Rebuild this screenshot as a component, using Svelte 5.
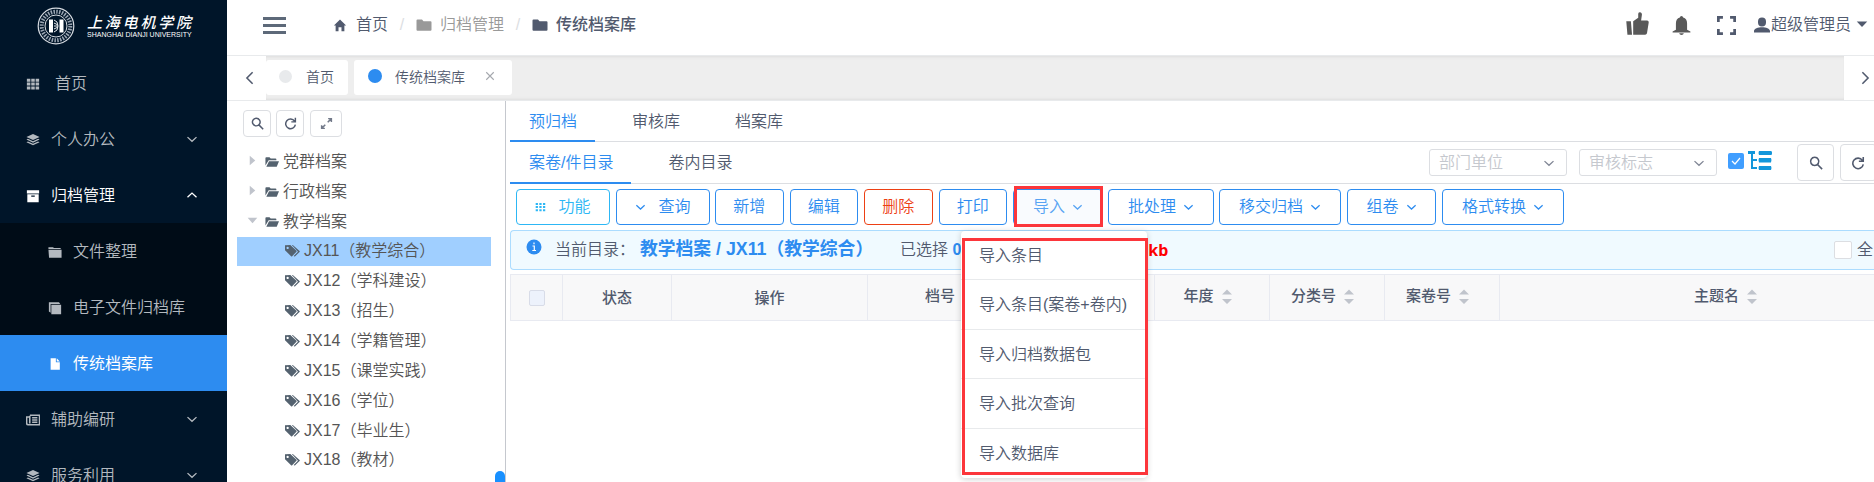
<script lang="ts">
  const icons: Record<string, string> = {
    grid: 'M1 2h4v3.400H1zM6 2h4v3.400H6zM11 2h4v3.400h-4zM1 6.400h4v3.400H1zM6 6.400h4v3.400H6zM11 6.400h4v3.400h-4zM1 10.800h4v3.400H1zM6 10.800h4v3.400H6zM11 10.800h4v3.400h-4z',
    dots: 'M1 2h3.300v3H1zM6.300 2h3.300v3H6.300zM11.600 2h3.300v3h-3.300zM1 6.600h3.300v3H1zM6.300 6.600h3.300v3H6.300zM11.600 6.600h3.300v3h-3.300zM1 11.200h3.300v3H1zM6.300 11.200h3.300v3H6.300zM11.600 11.200h3.300v3h-3.300z',
    layers: 'M8 1l7.5 3.5L8 8 .5 4.500zM2.200 6.600L8 9.300l5.800-2.700 1.700.9L8 11 .5 7.500zM2.200 9.600L8 12.300l5.800-2.700 1.700.9L8 14 .5 10.500z',
    box: 'M1 1.500h14v3.500H1zM1.500 6H14.500V15H1.500zM6 7.300V8.800h4V7.300z',
    folders: 'M.5 2.500h5l1.500 1h7.500v1H.5zM.5 5.300h15V14.500H1.200z',
    copies: 'M1 1.500h11.500l1.500 1.800H3v10.200l-2-1.500zM3.800 4.200H15V15H3.800z',
    file: 'M3 1.500h6v4.500h4.500v8.500H3zM10 1.500L13.500 5H10z',
    home: 'M8 1l7 7h-2v6.500H9.700V10H6.300v4.500H3V8H1z',
    folder: 'M.5 3.500q0-1 1-1h4.500l1.500 1.800h7q1 0 1 1v7.500q0 1-1 1h-13q-1 0-1-1z',
    open: 'M.5 12V3.500q0-1 1-1h3.700l1.300 1.500h5.500q1 0 1 1v1H4.200zM1.500 13.500L4.600 7H16l-2.600 6.500z',
    tags: 'M0 2.500v5.300l6.500 6.300q.6.400 1.100 0l4.600-4.700q.4-.6 0-1.100L5.700 2.200zM2.800 4a1.200 1.200 0 1 0 .01 0zM7.300 2.200h1l7.200 6.300q.6.600 0 1.200l-4.700 4.500q-.9.500-1.500-.3l4.500-4.700z',
    user: 'M8 .5a4 4 0 0 1 4 4v1a4 4 0 0 1-8 0v-1a4 4 0 0 1 4-4zM0 15.500v-1.600c0-2.300 4-3.700 8-3.700s8 1.400 8 3.700v1.600z',
    bell: 'M8 0q1.300 0 1.400 1.300 3.300 1 3.300 5v5.200L15.500 13v.9H.5V13l2.800-1.500V6.300q0-4 3.300-5Q6.700 0 8 0zM6 14.600h4Q9.600 16 8 16t-2-1.400z',
    thumb: 'M.2 6.500h3.200l.8 9.300H1zM5 6.500L8.500 4V1.200Q8.700.1 9.900.2q1.200.2 1.200 1.500l-.6 4.200h4.300q1.200.2 1 1.400l-1.200 7.500q-.3 1-1.300 1H5z',
    full: 'M0 0h5v2.300H2.300V5H0zM11 0h5v5h-2.300V2.300H11zM0 11h2.300v2.700H5V16H0zM13.700 11H16v5h-5v-2.300h2.700z',
    caret: 'M1 4.500h14L8 12z',
    right: 'M4 1l8 7-8 7z'
  };

  const lines: Record<string, string> = {
    down: 'M2 5.500l6 5.500 6-5.500',
    up: 'M2 11l6-5.500 6 5.500',
    left: 'M11 1.500L4.500 8l6.500 6.500',
    next: 'M5 1.500L11.500 8 5 14.500',
    search: 'M6.500 1.500a4.700 4.700 0 1 0 .01 0M10 10l5 5',
    refresh: 'M13 5A6 6 0 1 0 14 9.500M14 1v5H9',
    expand: 'M2 14L6.500 9.500M9.500 6.500L14 2M10 2h4v4M2 10v4h4',
    close: 'M2 2l12 12M14 2L2 14',
    news: 'M4.500 2.500h11v11h-13Q.7 13.300.7 11.500v-7h3.500M4.300 3v9M7 5.500h6M7 8h6M7 10.500h6'
  };

  const tree = [
    { label: '党群档案', open: false },
    { label: '行政档案', open: false },
    { label: '教学档案', open: true }
  ];
  const leaves = [
    'JX11（教学综合）',
    'JX12（学科建设）',
    'JX13（招生）',
    'JX14（学籍管理）',
    'JX15（课堂实践）',
    'JX16（学位）',
    'JX17（毕业生）',
    'JX18（教材）'
  ];

  const imports = ['导入条目', '导入条目(案卷+卷内)', '导入归档数据包', '导入批次查询', '导入数据库'];
  const plain = ['新增', '编辑', '删除', '打印'];

  let selected = $state('JX11（教学综合）');
</script>

{#snippet icon(name: string, cls = '')}
  <svg class="icon {cls}" viewBox="0 0 16 16"><path d={icons[name]} fill="currentColor" fill-rule="evenodd" /></svg>
{/snippet}

{#snippet line(name: string, cls = '')}
  <svg class="icon {cls}" viewBox="0 0 16 16"><path d={lines[name]} fill="none" stroke="currentColor" stroke-width="1.800" /></svg>
{/snippet}

{#snippet sorter()}
  <svg class="sorter" viewBox="0 0 10 16"><path d="M0 5.500L5 .5l5 5zM0 10h10l-5 5z" fill="#c0c4cc" /></svg>
{/snippet}

<div class="layout">
  <aside class="sidebar">
    <div class="logo">
      <svg class="seal" viewBox="0 0 38 38">
        <circle cx="19" cy="19" r="17.800" fill="none" stroke="#d5dae0" stroke-width="1.200" />
        <circle cx="19" cy="19" r="14.300" fill="none" stroke="#9aa5b2" stroke-width="4" stroke-dasharray="1.500 1.300" />
        <circle cx="19" cy="19" r="11" fill="none" stroke="#d5dae0" />
        <path d="M12 12.500h4v13h-4zM22.500 12.500h4v13h-4z" fill="#fff" />
        <path d="M17 13q4 1 4 6t-4 6M17 16l4 2M17 19h4M17 22l4-2" fill="none" stroke="#e8ebee" />
      </svg>
      <div class="school">
        <span class="school-cn">上海电机学院</span>
        <span class="school-en">SHANGHAI DIANJI UNIVERSITY</span>
      </div>
    </div>
    <nav>
      <div class="item home">{@render icon('grid')}<span>首页</span></div>
      <div class="item">{@render icon('layers')}<span>个人办公</span>{@render line('down', 'arrow')}</div>
      <div class="item opened">{@render icon('box')}<span>归档管理</span>{@render line('up', 'arrow')}</div>
      <div class="sub">
        <div class="item">{@render icon('folders')}<span>文件整理</span></div>
        <div class="item">{@render icon('copies')}<span>电子文件归档库</span></div>
        <div class="item current">{@render icon('file')}<span>传统档案库</span></div>
      </div>
      <div class="item">{@render line('news')}<span>辅助编研</span>{@render line('down', 'arrow')}</div>
      <div class="item">{@render icon('layers')}<span>服务利用</span>{@render line('down', 'arrow')}</div>
    </nav>
  </aside>

  <div class="main">
    <header class="header">
      <div class="burger"><i></i><i></i><i></i></div>
      <div class="crumbs">
        {@render icon('home', 'home-icon')}<span>首页</span>
        <em>/</em>
        {@render icon('folder', 'grey')}<span class="grey">归档管理</span>
        <em>/</em>
        {@render icon('folder')}<b>传统档案库</b>
      </div>
      <div class="tools">
        {@render icon('thumb', 'thumb')}
        {@render icon('bell', 'bell')}
        {@render icon('full', 'full')}
        {@render icon('user', 'user')}
        <span>超级管理员</span>
        {@render icon('caret', 'user-caret')}
      </div>
    </header>

    <div class="pages">
      <button class="scroll prev">{@render line('left')}</button>
      <div class="page-list">
        <div class="page"><i class="dot"></i><span>首页</span></div>
        <div class="page active"><i class="dot"></i><span>传统档案库</span>{@render line('close', 'close')}</div>
      </div>
      <button class="scroll next">{@render line('next')}</button>
    </div>

    <div class="content">
      <section class="tree">
        <div class="tree-tools">
          <button>{@render line('search')}</button>
          <button>{@render line('refresh')}</button>
          <button class="wide">{@render line('expand', 'thin')}</button>
        </div>
        {#each tree as node}
          <div class="node">
            {@render icon('right', node.open ? 'twist open' : 'twist')}
            {@render icon('open', 'folder')}
            <span>{node.label}</span>
          </div>
        {/each}
        {#each leaves as leaf}
          <div class="node leaf" class:selected={leaf === selected} onclick={() => (selected = leaf)} role="presentation">
            {@render icon('tags')}
            <span>{leaf}</span>
          </div>
        {/each}
        <div class="thumb-bar"></div>
      </section>

      <section class="work">
        <div class="tabs">
          <span class="tab active">预归档</span>
          <span class="tab">审核库</span>
          <span class="tab">档案库</span>
        </div>
        <div class="tabs second">
          <span class="tab active">案卷/件目录</span>
          <span class="tab">卷内目录</span>
          <div class="filters">
            <div class="select"><span>部门单位</span>{@render line('down')}</div>
            <div class="select"><span>审核标志</span>{@render line('down')}</div>
            <svg class="checked" viewBox="0 0 16 16"><rect width="16" height="16" rx="2" fill="#409eff" /><path d="M4 8l3 3 5-6" fill="none" stroke="#fff" stroke-width="1.200" /></svg>
            <svg class="tree-mode" viewBox="0 0 24 20"><path d="M0 0h7v3H5v5h4v2H5v6h4v2H3V3H0zM11 0h12q1 0 1 1.500v1Q24 4 23 4H11q-1-2 0-4zM11 7h12q1 2 0 4.500H11q-1-2.500 0-4.500zM11 15h12q1 2 0 4H11q-1-2 0-4z" fill="#1296db" /></svg>
            <button>{@render line('search')}</button>
            <button>{@render line('refresh')}</button>
          </div>
        </div>

        <div class="actions">
          <button class="func">{@render icon('dots')}功能</button>
          <button class="query">{@render line('down')}查询</button>
          {#each plain as label}
            <button class="plain" class:danger={label === '删除'}>{label}</button>
          {/each}
          <div class="import">
            <button>导入{@render line('down')}</button>
            <div class="mark"></div>
            <div class="menu">
              {#each imports as label}
                <div class="menu-item">{label}</div>
              {/each}
              <div class="menu-mark"></div>
            </div>
          </div>
          <button class="w106">批处理{@render line('down')}</button>
          <button class="w122">移交归档{@render line('down')}</button>
          <button class="w89">组卷{@render line('down')}</button>
          <button class="w122">格式转换{@render line('down')}</button>
        </div>

        <div class="notice">
          <svg class="info" viewBox="0 0 16 16"><circle cx="8" cy="8" r="7.500" fill="#2d8cf0" /><path d="M8 3.500v1.800M6.500 7H8.300v4.500M6.300 11.500h3.700" fill="none" stroke="#fff" stroke-width="1.200" /></svg>
          <span class="where">当前目录：</span>
          <strong>教学档案 / JX11（教学综合）</strong>
          <span class="count">已选择 <b>0</b></span>
          <span class="size">kb</span>
          <label><i></i>全</label>
        </div>

        <div class="thead">
          <div class="cell check"><i></i></div>
          <div class="cell low">状态</div>
          <div class="cell low">操作</div>
          <div class="cell number">档号{@render sorter()}</div>
          <div class="cell sort">年度{@render sorter()}</div>
          <div class="cell sort">分类号{@render sorter()}</div>
          <div class="cell sort">案卷号{@render sorter()}</div>
          <div class="cell sort">主题名{@render sorter()}</div>
        </div>
      </section>
    </div>
  </div>
</div>

<style>
  :global(body) {
    overflow: hidden;
  }

  .layout {
    display: flex;
    height: 482px;
    overflow: hidden;
    background: #fff;
    color: #515a6e;
    font: 350 16px/24px "Liberation Sans", "Noto Sans CJK SC", sans-serif;
    white-space: nowrap;
  }

  .layout * {
    box-sizing: border-box;
  }

  .icon {
    display: block;
    flex: none;
    width: 14px;
    height: 14px;
  }

  button {
    display: flex;
    align-items: center;
    justify-content: center;
    padding: 0;
    border: 1px solid #dcdee2;
    border-radius: 4px;
    background: #fff;
    color: #515a6e;
    font: inherit;
  }

  /* sidebar */
  .sidebar {
    flex: none;
    width: 227px;
    background: #001529;
    color: #b3b9bf;
  }

  .logo {
    display: flex;
    align-items: center;
    height: 55px;
    padding: 0 0 4px 37px;
    gap: 12px;
  }

  .seal {
    width: 38px;
    height: 38px;
  }

  .school {
    display: flex;
    flex-direction: column;
    color: #fff;
    padding-top: 1px;
  }

  .school-cn {
    font: italic 500 15px/17px "Noto Sans CJK SC", sans-serif;
    letter-spacing: 2.800px;
  }

  .school-en {
    margin-top: 1px;
    font-size: 7px;
    line-height: 8px;
    font-weight: 400;
  }

  .item {
    display: flex;
    align-items: center;
    height: 56px;
    padding: 1px 28px 0 26px;
    gap: 11px;
  }

  .item.home {
    gap: 15px;
  }

  .item.opened {
    color: #fff;
  }

  .item :global(.arrow) {
    width: 12px;
    margin: -2px 1px 0 auto;
  }

  .sub {
    background: #000c17;
  }

  .sub .item {
    padding-left: 48px;
  }

  .sub .current {
    background: #2d8cf0;
    color: #fff;
    font-weight: 400;
  }

  /* header */
  .main {
    flex: 1;
    min-width: 0;
  }

  .header {
    display: flex;
    align-items: center;
    height: 56px;
    padding: 0 6px 5px 36px;
    border-bottom: 1px solid #e8eaec;
  }

  .burger {
    display: grid;
    gap: 4px;
    width: 23px;
    margin-right: 47px;
  }

  .burger i {
    height: 3px;
    background: #5d6979;
  }

  .crumbs {
    display: flex;
    align-items: center;
  }

  .crumbs .icon {
    width: 16px;
    height: 16px;
    margin-right: 8px;
  }

  .crumbs .home-icon {
    width: 14px;
    height: 15px;
    margin-right: 9px;
  }

  .crumbs .grey {
    color: #999;
  }

  .crumbs em {
    width: 28px;
    text-align: center;
    color: #dcdee2;
    font-style: normal;
  }

  .crumbs b {
    font-weight: 500;
  }

  .tools {
    display: flex;
    align-items: center;
    margin-left: auto;
  }

  .tools .thumb {
    width: 23px;
    height: 23px;
    margin: 0 23px 4px 0;
    color: #595959;
  }

  .tools .bell {
    width: 19px;
    height: 21px;
    margin-right: 26px;
    color: #595959;
  }

  .tools .full {
    width: 19px;
    height: 19px;
    margin: 1px 18px 0 0;
  }

  .tools .user {
    width: 16px;
    height: 16px;
    margin-right: 1px;
  }

  .tools .user-caret {
    width: 12px;
    margin: -2px 0 0 5px;
    height: 12px;
  }

  /* opened pages */
  .pages {
    display: flex;
    height: 45px;
    border-bottom: 1px solid #e8eaec;
    background: #eee;
    font-size: 14px;
  }

  .pages .scroll {
    border: 0;
    border-radius: 0;
    height: 44px;
  }

  .pages .prev {
    width: 39px;
    padding-left: 6px;
  }

  .pages .next {
    width: 30px;
    padding-left: 12px;
  }

  .page-list {
    display: flex;
    flex: 1;
    gap: 6px;
    padding: 4px 0 5px;
    box-shadow: inset 0 3px 3px -2px #ddd, inset 0 -3px 3px -2px #ddd;
  }

  .page {
    display: flex;
    align-items: center;
    padding: 0 14px 3px 13px;
    border-radius: 3px;
    background: #fff;
  }

  .dot {
    width: 13px;
    height: 13px;
    margin-right: 14px;
    border-radius: 50%;
    background: #e8eaec;
  }

  .page span {
    padding-top: 2px;
  }

  .page.active {
    padding: 0 17px 3px 14px;
  }

  .active .dot {
    width: 14px;
    height: 14px;
    margin-right: 13px;
    background: #2d8cf0;
  }

  .page .close {
    width: 10px;
    height: 10px;
    margin-left: 20px;
    color: #a5a8ae;
  }

  /* archive tree */
  .content {
    display: flex;
    height: 381px;
  }

  .tree {
    position: relative;
    flex: none;
    width: 279px;
    padding: 9px 14px 0 10px;
    border-right: 1px solid #c5c8ce;
    color: #555;
  }

  .tree-tools {
    display: flex;
    gap: 5px;
    height: 37px;
    padding-left: 6px;
  }

  .tree-tools button {
    width: 28px;
    height: 27px;
  }

  .tree-tools .wide {
    width: 32px;
    margin-left: 1px;
  }

  .tree-tools .icon {
    width: 13px;
    height: 13px;
  }

  .tree-tools .thin {
    stroke-width: 1px;
    opacity: 0.8;
  }

  .node {
    display: flex;
    align-items: center;
    height: 29.850px;
    padding: 0 0 1px 10px;
  }

  .node span {
    padding-top: 1px;
  }

  .node .twist {
    width: 11px;
    height: 11px;
    margin: -2px 7px 0 0;
    color: #c0c4cc;
  }

  .node .twist.open {
    transform: rotate(90deg);
  }

  .node .folder {
    margin: 2px 4px 0 0;
    color: #54626f;
  }

  .leaf {
    padding-left: 48px;
  }

  .leaf .icon {
    width: 15px;
    height: 15px;
    margin-right: 4px;
    color: #54626f;
  }

  .leaf.selected {
    background: #a0cfff;
  }

  .thumb-bar {
    position: absolute;
    right: 0;
    bottom: 0;
    width: 10px;
    height: 11px;
    border-radius: 5px 5px 0 0;
    background: #1890ff;
  }

  /* work area */
  .work {
    flex: 1;
    min-width: 0;
    padding-left: 4px;
  }

  .tabs {
    display: flex;
    height: 41px;
    border-bottom: 1px solid #dcdee2;
  }

  .tabs.second {
    height: 42px;
  }

  .tab {
    height: 41px;
    margin-right: 18px;
    padding: 9px 18px 0 19px;
  }

  .second .tab {
    height: 42px;
  }

  .tab.active {
    border-bottom: 2px solid #2d8cf0;
    color: #2d8cf0;
  }

  .filters {
    display: flex;
    align-items: center;
    flex: none;
    margin: 0 -3px 0 auto;
  }

  .select {
    display: flex;
    align-items: center;
    justify-content: space-between;
    width: 138px;
    height: 27px;
    margin-right: 12px;
    padding: 0 11px 0 9px;
    border: 1px solid #dcdee2;
    border-radius: 3px;
    color: #c5c8ce;
  }

  .select .icon {
    width: 12px;
    color: #808695;
  }

  .checked {
    width: 16px;
    height: 16px;
    margin: 0 4px 3px -1px;
  }

  .tree-mode {
    width: 24px;
    height: 20px;
    margin: 0 25px 3px 0;
  }

  .filters button {
    width: 37px;
    height: 37px;
  }

  .filters button:last-child {
    margin-left: 6px;
    padding-right: 2px;
  }

  .actions {
    display: flex;
    gap: 6px;
    padding: 5px 0 5px 6px;
  }

  .actions button {
    gap: 7px;
    width: 68.500px;
    height: 36px;
    border-color: #2d8cf0;
    color: #2d8cf0;
  }

  .actions .icon {
    width: 11px;
    height: 12px;
  }

  .actions .func {
    gap: 12px;
    width: 94px;
    border-color: #2db7f5;
    color: #2db7f5;
  }

  .actions .query {
    gap: 12px;
    width: 94px;
    margin-right: -1px;
  }

  .actions .danger {
    border-color: #ed4014;
    color: #ed4014;
  }

  .import {
    position: relative;
    margin-right: -1px;
  }

  .import button {
    width: 90px;
    background: #f9fbfe;
    color: #57a3f3;
  }

  .mark {
    position: absolute;
    top: -3px;
    left: 1px;
    width: 89px;
    height: 41px;
    border: 3px solid #fc363b;
  }

  .menu {
    position: absolute;
    z-index: 2;
    top: 42px;
    left: -52px;
    width: 186px;
    height: 247px;
    border-radius: 4px;
    background: #fff;
    box-shadow: 0 1px 6px rgb(0 0 0 / 0.2);
  }

  .menu-item {
    height: 49.400px;
    padding: 13px 18px 0;
    border-bottom: 1px solid #e8eaec;
  }

  .menu-item:nth-child(5) {
    border: 0;
  }

  .menu-mark {
    position: absolute;
    top: 7px;
    left: 1px;
    width: 186px;
    height: 237px;
    border: 3px solid #fc363b;
  }

  .actions .w106 {
    width: 106px;
    margin-right: -1px;
  }

  .actions .w122 {
    width: 122px;
  }

  .actions .w89 {
    width: 89px;
  }

  .notice {
    display: flex;
    align-items: center;
    height: 40px;
    padding-left: 15px;
    border: 1px solid #abdcff;
    border-right: 0;
    border-radius: 4px 0 0 4px;
    background: #f0faff;
  }

  .info {
    width: 16px;
    height: 16px;
    margin: 0 13px 6px 0;
  }

  .where {
    width: 85px;
  }

  .notice strong {
    width: 260px;
    margin-top: -2px;
    color: #2d8cf0;
    font-size: 17.800px;
    font-weight: 700;
  }

  .count b {
    color: #2d8cf0;
    font-weight: 700;
  }

  .size {
    margin-left: 187px;
    color: #f00;
    font: 700 16px "Noto Sans", sans-serif;
  }

  .notice label {
    display: flex;
    align-items: center;
    gap: 5px;
    width: 40px;
    margin-left: auto;
  }

  .notice label i {
    flex: none;
    width: 18px;
    height: 18px;
    border: 1px solid #dcdee2;
    border-radius: 2px;
    background: #fff;
  }

  .thead {
    display: grid;
    grid-template-columns: 52px 109px 196px 287px 115px 115px 115px 461px;
    width: 1452px;
    height: 47px;
    margin-top: 4px;
    border: 1px solid #e8eaf1;
    border-width: 1px 0 1px 1px;
    background: #f8f8f9;
    font-size: 15px;
    font-weight: 500;
  }

  .cell {
    display: flex;
    align-items: center;
    justify-content: center;
    gap: 8px;
    padding-bottom: 4px;
    border-right: 1px solid #e8eaf1;
  }

  .cell.low {
    padding-bottom: 0;
  }

  .cell.number {
    justify-content: start;
    padding-left: 57px;
  }

  .cell.sort {
    padding-right: 9px;
  }

  .sorter {
    width: 10px;
    height: 16px;
    margin-top: 3px;
  }

  .check i {
    width: 16px;
    height: 16px;
    margin-top: 4px;
    border: 1px solid #d8dce8;
    border-radius: 2px;
    background: #edf2fc;
  }
</style>
